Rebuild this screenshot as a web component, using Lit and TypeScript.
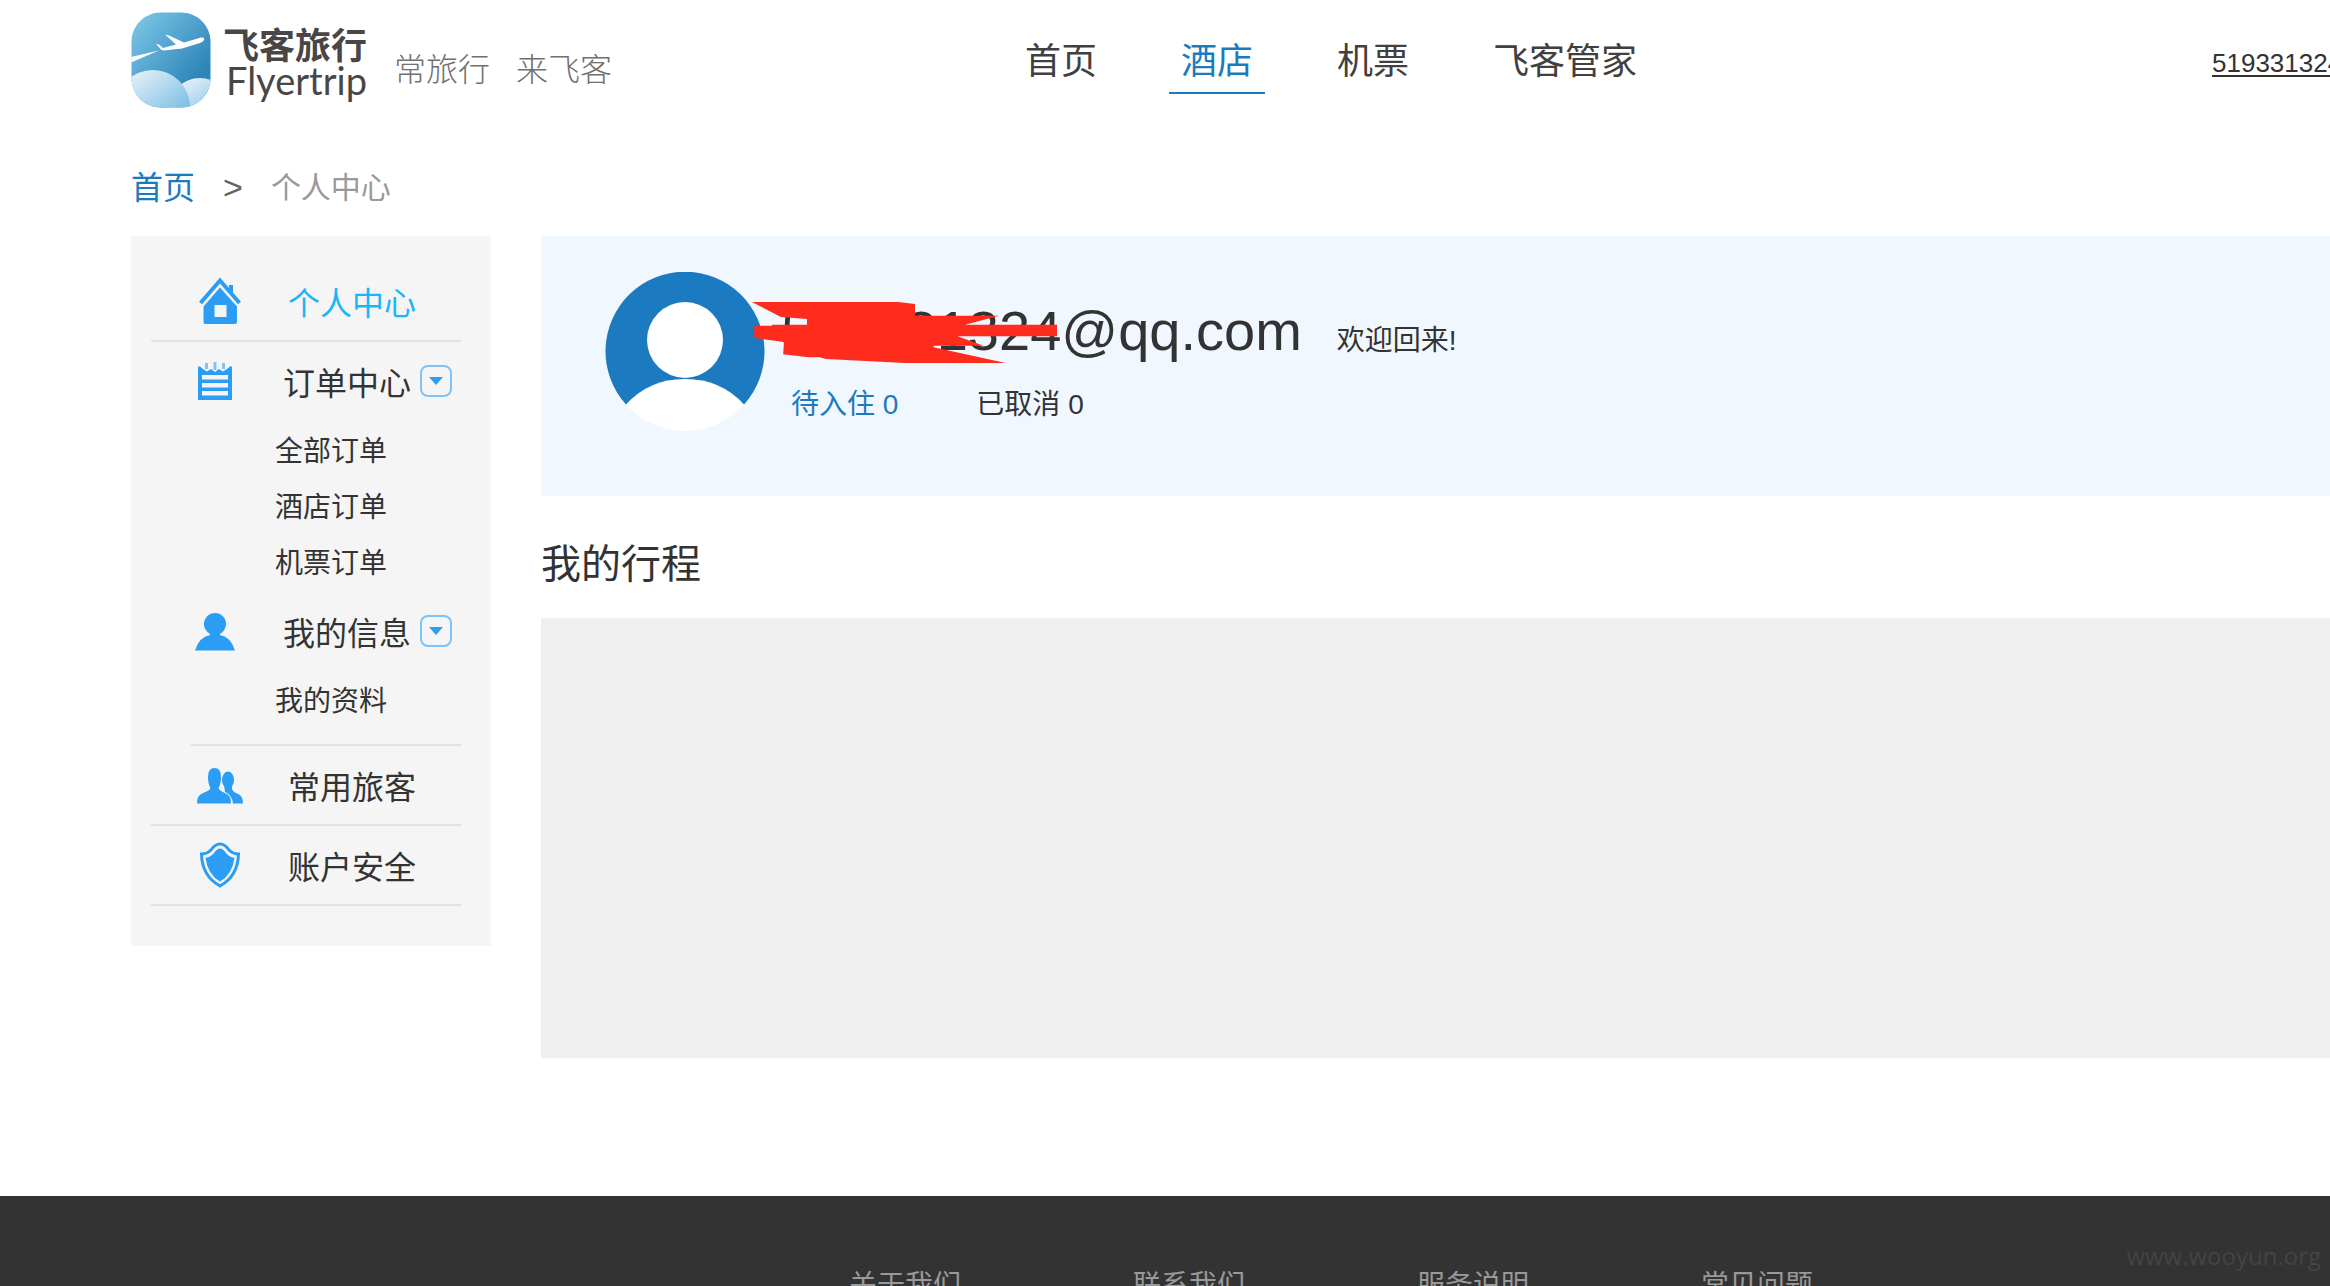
import { LitElement, html, css, svg } from "lit";
import { customElement } from "lit/decorators.js";
import { classMap } from "lit/directives/class-map.js";

const EMAIL = "519331324@qq.com";

const NAV = [
  { label: "首页", active: false },
  { label: "酒店", active: true },
  { label: "机票", active: false },
  { label: "飞客管家", active: false },
];

const FOOTER = ["关于我们", "联系我们", "服务说明", "常见问题"];

const logo = html`<svg class="mark" viewBox="0 0 80 96" width="80" height="96" aria-hidden="true">
  <defs>
    <linearGradient id="sky" x1="0" y1="0" x2="1" y2="1">
      <stop offset="0.05" stop-color="#7cc6e6" />
      <stop offset="0.75" stop-color="#2f86ba" />
    </linearGradient>
    <linearGradient id="cloud" x1="0.1" y1="0" x2="0.6" y2="0.7">
      <stop offset="0" stop-color="#f2f7fc" />
      <stop offset="1" stop-color="#84c2e6" />
    </linearGradient>
    <clipPath id="shape">
      <path d="M30 0.5H50C66 0.5 79.5 13 79.5 30V66C79.5 83 66 95.5 50 95.5H30C14 95.5 0.5 83 0.5 66V30C0.5 13 14 0.5 30 0.5Z" />
    </clipPath>
  </defs>
  <g clip-path="url(#shape)">
    <rect width="80" height="96" fill="url(#sky)" />
    <circle cx="69" cy="98" r="32" fill="url(#cloud)" />
    <circle cx="22" cy="95" r="37" fill="url(#cloud)" />
    <path d="M0 45L28 38.5L0 50.5Z" fill="#fff" />
    <path d="M25 32L28 32.5L32 36L45 32.5L34 22.500L38 23.500L53 30.500L70 25.500Q74 25 73 28Q72.500 29.500 69 31L51 36.500L33 38.500L30.500 38Z" fill="#fff" />
  </g>
</svg>`;

const icons: Record<string, unknown> = {
  home: svg`<path d="M1.500 26L21 3.500L40.500 26" fill="none" stroke="#2c9df4" stroke-width="4"/><path d="M30 8H34V17L30 13Z"/><path d="M21 10.500L38 29.500V45Q38 47 36 47H6.500Q4.500 47 4.500 45V29.500ZM15.500 28V40H27.500V28Z" fill-rule="evenodd"/>`,
  orders: svg`<path d="M0 4.500H2L5 7L9 9.500L13 7L17 10L21 7L25 9.500L29 7L32 4.500H34V38H0ZM4 13V17.500H30V13ZM4 21V25.500H30V21ZM4 29V33.500H30V29Z" fill-rule="evenodd"/><path d="M8.500 1V7M17 0V8M25.500 1V7" stroke="#80c3f8" stroke-width="3"/>`,
  person: svg`<circle cx="20" cy="12" r="11"/><path d="M0 38.500Q4 25 15 23V20H25V23Q36 25 40 38.500Z"/>`,
  people: svg`<ellipse cx="31" cy="13" rx="6" ry="8.500"/><path d="M27 18H35V22Q36 25 42 27.500Q46 29.500 46 36.500H36Q35 28 28 25Z"/><path d="M0 36.500Q0 28 6 26Q13 23.500 13.500 21Q11 17 11 10Q11 1 17.500 1Q24 1 24 10Q24 17 21.500 21Q22 23.500 28 26Q34 28 34 36.500Z"/>`,
  shield: svg`<path d="M20 2Q25 2 29 8Q33 12 38.500 12Q38 34 20 44Q2 34 1.500 12Q7 12 11 8Q15 2 20 2Z" fill="none" stroke="#2c9df4" stroke-width="3"/><path d="M20 6.500Q23 6.500 26 11Q29 15 34.500 16Q32 33 20 39.500Q8 33 5.500 16Q11 15 14 11Q17 6.500 20 6.500Z"/>`,
};

const SIZES: Record<string, [number, number]> = {
  home: [42, 48],
  orders: [34, 38],
  person: [40, 39],
  people: [46, 37],
  shield: [40, 46],
};

const icon = (name: string) => {
  const [w, h] = SIZES[name];
  return html`<svg class="glyph" viewBox="0 0 ${w} ${h}" width=${w} height=${h} fill="#2c9df4" aria-hidden="true">${icons[name]}</svg>`;
};

@customElement("side-menu")
export class SideMenu extends LitElement {
  static styles = css`
    :host {
      display: block;
      flex: none;
      width: 360px;
      box-sizing: border-box;
      padding: 26px 30px 40px 20px;
      background: #f5f5f5;
      color: #333;
    }
    a {
      color: inherit;
      text-decoration: none;
    }
    .item {
      display: flex;
      align-items: center;
      height: 78px;
      border-bottom: 2px solid #e2e2e2;
      font-size: 32px;
    }
    .active {
      color: #1cb5f8;
    }
    .slot {
      display: flex;
      justify-content: center;
      width: 48px;
      margin-right: 44px;
    }
    .item .slot {
      margin-left: 45px;
    }
    .groups {
      margin-left: 40px;
      padding-bottom: 14px;
      border-bottom: 2px solid #e2e2e2;
    }
    .head {
      display: flex;
      align-items: center;
      height: 78px;
      padding-bottom: 4px;
      font-size: 32px;
    }
    .toggle {
      display: flex;
      align-items: center;
      justify-content: center;
      width: 32px;
      height: 32px;
      margin: 0 0 0 9px;
      padding: 0;
      border: 2px solid #7cc3fa;
      border-radius: 8px;
      background: none;
    }
    .sub {
      margin: 0;
      padding: 0 0 0 84px;
      list-style: none;
      font-size: 28px;
      line-height: 56px;
    }
    .glyph {
      flex: none;
    }
  `;

  private item(name: string, label: string, active = false) {
    return html`<a href="#" class=${classMap({ item: true, active })}>
      <span class="slot">${icon(name)}</span><span>${label}</span>
    </a>`;
  }

  private group(name: string, label: string, children: string[]) {
    return html`<div class="group">
      <div class="head">
        <span class="slot">${icon(name)}</span><a href="#">${label}</a>
        <button class="toggle" type="button" aria-label=${label}>
          <svg viewBox="0 0 14 8" width="14" height="8" aria-hidden="true"><path d="M0 0H14L7 8Z" fill="#2c9df4" /></svg>
        </button>
      </div>
      <ul class="sub">
        ${children.map((c) => html`<li><a href="#">${c}</a></li>`)}
      </ul>
    </div>`;
  }

  render() {
    return html`
      ${this.item("home", "个人中心", true)}
      <div class="groups">
        ${this.group("orders", "订单中心", ["全部订单", "酒店订单", "机票订单"])}
        ${this.group("person", "我的信息", ["我的资料"])}
      </div>
      ${this.item("people", "常用旅客")} ${this.item("shield", "账户安全")}
    `;
  }
}

@customElement("app-root")
export class AppRoot extends LitElement {
  static styles = css`
    :host {
      display: block;
      position: relative;
      max-height: 100vh;
      overflow: hidden;
      background: #fff;
      color: #333;
      font-family: "Liberation Sans", "Noto Sans CJK SC", sans-serif;
    }
    a {
      color: inherit;
      text-decoration: none;
    }
    .header {
      display: flex;
      align-items: flex-start;
      height: 136px;
      padding-left: 131px;
      white-space: nowrap;
    }
    .brand {
      display: flex;
      flex: 0 1 882px;
      padding-top: 12px;
    }
    .mark {
      flex: none;
    }
    .names {
      display: flex;
      flex-direction: column;
      padding: 17px 0 0 12px;
      color: #4a4646;
    }
    .cn {
      font-size: 36px;
      font-weight: 700;
      line-height: 36px;
    }
    .en {
      padding-left: 3px;
      font-family: Lato, sans-serif;
      font-size: 38px;
      line-height: 30px;
    }
    .slogan {
      display: flex;
      gap: 26px;
      padding: 38px 0 0 27px;
      color: #707070;
      font-size: 32px;
      line-height: 40px;
      font-weight: 300;
    }
    .nav {
      display: flex;
      gap: 60px;
      padding-top: 32px;
      font-size: 36px;
      line-height: 60px;
      color: #404040;
    }
    .tab {
      border-bottom: 2px solid transparent;
      padding: 0 12px;
    }
    .current {
      color: #1c7ac1;
      border-color: #1c7ac1;
    }
    .user {
      width: 118px;
      margin-left: auto;
      padding-top: 48px;
      font-size: 26px;
      line-height: 30px;
      text-decoration: underline;
      text-underline-offset: 3px;
    }
    .crumbs {
      display: flex;
      align-items: center;
      height: 98px;
      padding: 0 0 2px 131px;
      font-size: 30px;
      color: #999;
    }
    .crumbs a {
      font-size: 32px;
      color: #1c7ac1;
    }
    .sep {
      padding: 4px 28px 0;
      font-size: 34px;
      color: #666;
    }
    .main {
      display: flex;
      align-items: flex-start;
      gap: 50px;
      padding: 0 0 138px 131px;
    }
    .content {
      flex: 1;
      min-width: 0;
    }
    .welcome {
      display: flex;
      height: 260px;
      box-sizing: border-box;
      padding: 36px 0 0 64px;
      background: #f0f7fe;
    }
    .avatar {
      flex: none;
    }
    .info {
      padding: 23px 0 0 16px;
      white-space: nowrap;
    }
    .hello {
      display: flex;
      align-items: baseline;
      gap: 35px;
      margin: 0;
      font-size: 28px;
      font-weight: 400;
      line-height: 72px;
    }
    .mail {
      position: relative;
      font-size: 56px;
    }
    .scribble {
      position: absolute;
      left: -29px;
      top: 7px;
    }
    .stats {
      display: flex;
      gap: 78px;
      padding: 8px 0 0 10px;
      font-size: 28px;
      line-height: 40px;
    }
    .pending {
      color: #1c7ac1;
    }
    .title {
      margin: 0;
      padding-top: 14px;
      font-size: 40px;
      font-weight: 400;
      line-height: 108px;
    }
    .trips {
      height: 440px;
      background: #efefef;
    }
    .footer {
      display: flex;
      gap: 172px;
      padding: 66px 0 60px 849px;
      background: #333;
      color: #999;
      font-size: 28px;
      line-height: 48px;
      white-space: nowrap;
    }
    .watermark {
      position: absolute;
      right: 9px;
      bottom: 12px;
      color: #444;
      font-family: "Open Sans", sans-serif;
      font-size: 24px;
      line-height: 36px;
    }
  `;

  render() {
    return html`
      <header class="header">
        <a class="brand" href="#">
          ${logo}
          <span class="names"><span class="cn">飞客旅行</span><span class="en">Flyertrip</span></span>
          <span class="slogan"><span>常旅行</span><span>来飞客</span></span>
        </a>
        <nav class="nav">
          ${NAV.map((n) => html`<a href="#" class=${classMap({ tab: true, current: n.active })}>${n.label}</a>`)}
        </nav>
        <a class="user" href="#">${EMAIL}</a>
      </header>
      <div class="crumbs"><a href="#">首页</a><span class="sep">&gt;</span><span>个人中心</span></div>
      <main class="main">
        <side-menu></side-menu>
        <div class="content">
          <section class="welcome">
            <svg class="avatar" viewBox="0 0 160 160" width="160" height="160" aria-hidden="true">
              <path d="M21 132.500A79.500 79.500 0 1 1 139 132.500Z" fill="#1c7ac1" />
              <circle cx="80" cy="68" r="38" fill="#fff" />
              <path d="M21 132.500Q44 107 80 107Q116 107 139 132.500A79 79 0 0 1 21 132.500Z" fill="#fff" />
            </svg>
            <div class="info">
              <h1 class="hello">
                <span class="mail">${EMAIL}<svg class="scribble" viewBox="0 0 306 61" width="306" height="61" aria-hidden="true">
                    <path fill="#ff2b1c" d="M0 0H146L163 2V13.700H247L213 22.700H305V34.300H205.500L231.600 43.700H181.600V45.300L253.700 61H153L74.400 57L67.300 55.300H56.600L31.200 52.300L32 40L2.300 36V23.700H20V22.700H55V17L29 15Z" />
                  </svg></span>
                <span>欢迎回来!</span>
              </h1>
              <div class="stats"><a class="pending" href="#">待入住 0</a><a href="#">已取消 0</a></div>
            </div>
          </section>
          <h2 class="title">我的行程</h2>
          <div class="trips"></div>
        </div>
      </main>
      <footer class="footer">${FOOTER.map((f) => html`<a href="#">${f}</a>`)}</footer>
      <span class="watermark">www.wooyun.org</span>
    `;
  }
}
